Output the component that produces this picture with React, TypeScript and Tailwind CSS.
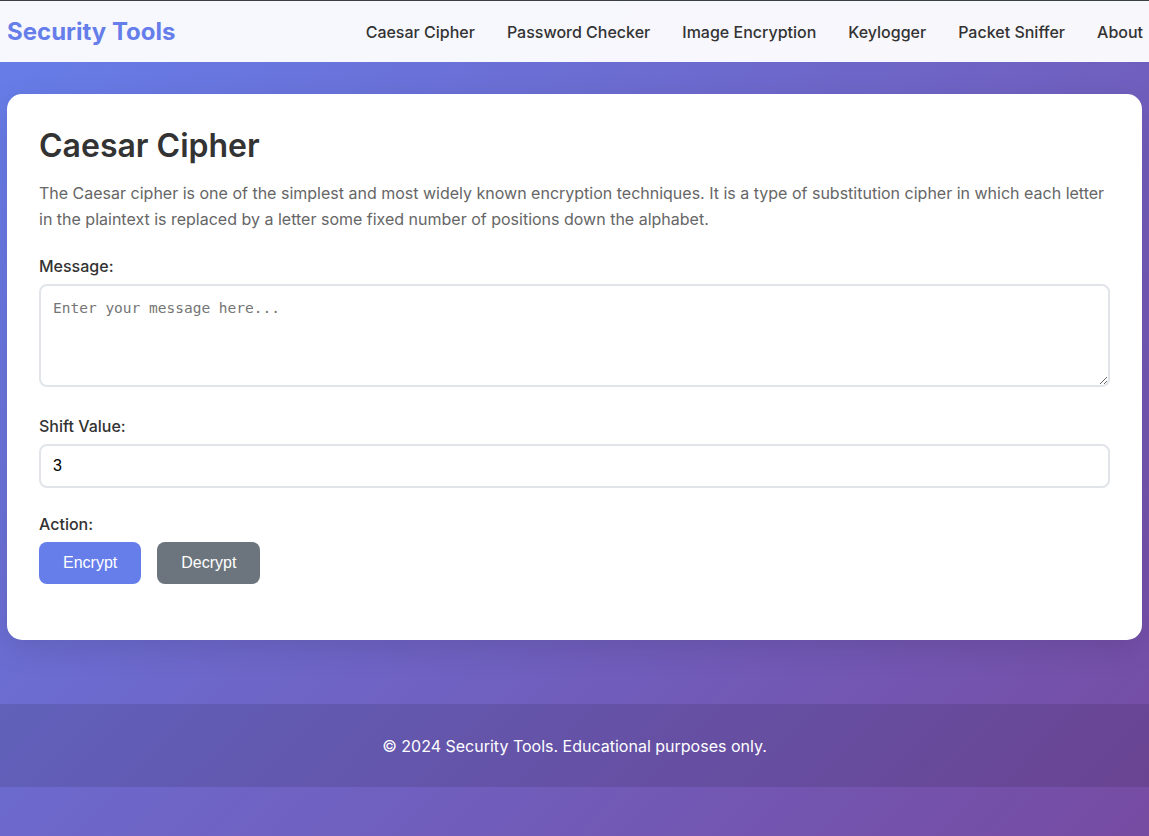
const navLinks = ['Caesar Cipher', 'Password Checker', 'Image Encryption', 'Keylogger', 'Packet Sniffer', 'About']

export default function App() {
  return (
    <div className="min-h-screen bg-[linear-gradient(135deg,#667eea_0%,#764ba2_100%)] font-['Inter',sans-serif] text-[#333]">
      <header className="h-[62px] bg-white/95 border-t border-[#3b3f46] flex items-center justify-between pl-[7px] pr-[6px]">
        <div className="text-[24px] font-bold text-[#667eea] leading-none">Security Tools</div>
        <nav className="flex items-center gap-[32px]">
          {navLinks.map((link) => (
            <a key={link} href="#" className="text-[16px] font-medium text-[#333] leading-none">
              {link}
            </a>
          ))}
        </nav>
      </header>

      <main className="mx-[7px] mt-[32px] bg-white rounded-[15px] p-[32px] shadow-[0_10px_30px_rgba(0,0,0,0.1)]">
        <h1 className="text-[32px] font-semibold leading-[40px] text-[#333] mb-[14px]">Caesar Cipher</h1>
        <p className="text-[16px] leading-[26px] text-[#666] mb-[22px]">
          The Caesar cipher is one of the simplest and most widely known encryption techniques. It is a type of substitution cipher in which each letter in the plaintext is replaced by a letter some fixed number of positions down the alphabet.
        </p>

        <div className="mb-[27px]">
          <label className="block text-[16px] font-medium leading-[24px] mb-[6px]">Message:</label>
          <textarea
            placeholder="Enter your message here..."
            className="block w-full h-[103px] border-2 border-[#e1e5e9] rounded-[8px] px-[12px] py-[12px] font-['DejaVu_Sans_Mono',monospace] text-[14.5px] placeholder:text-[#757575] outline-none"
          />
        </div>

        <div className="mb-[24px]">
          <label className="block text-[16px] font-medium leading-[24px] mb-[6px]">Shift Value:</label>
          <input
            type="number"
            defaultValue={3}
            className="block w-full h-[44px] border-2 border-[#e1e5e9] rounded-[8px] px-[12px] font-['Liberation_Sans',sans-serif] text-[16px] text-black outline-none"
          />
        </div>

        <div className="mb-[24px]">
          <label className="block text-[16px] font-medium leading-[24px] mb-[6px]">Action:</label>
          <div className="flex gap-[16px]">
            <button className="bg-[#667eea] text-white rounded-[8px] px-[24px] h-[42px] font-['Liberation_Sans',sans-serif] text-[16px]">
              Encrypt
            </button>
            <button className="bg-[#6c757d] text-white rounded-[8px] px-[24px] h-[42px] font-['Liberation_Sans',sans-serif] text-[16px]">
              Decrypt
            </button>
          </div>
        </div>
      </main>

      <footer className="mt-[64px] h-[83px] bg-black/10 flex items-center justify-center text-white text-[16px]">
        © 2024 Security Tools. Educational purposes only.
      </footer>
    </div>
  )
}
